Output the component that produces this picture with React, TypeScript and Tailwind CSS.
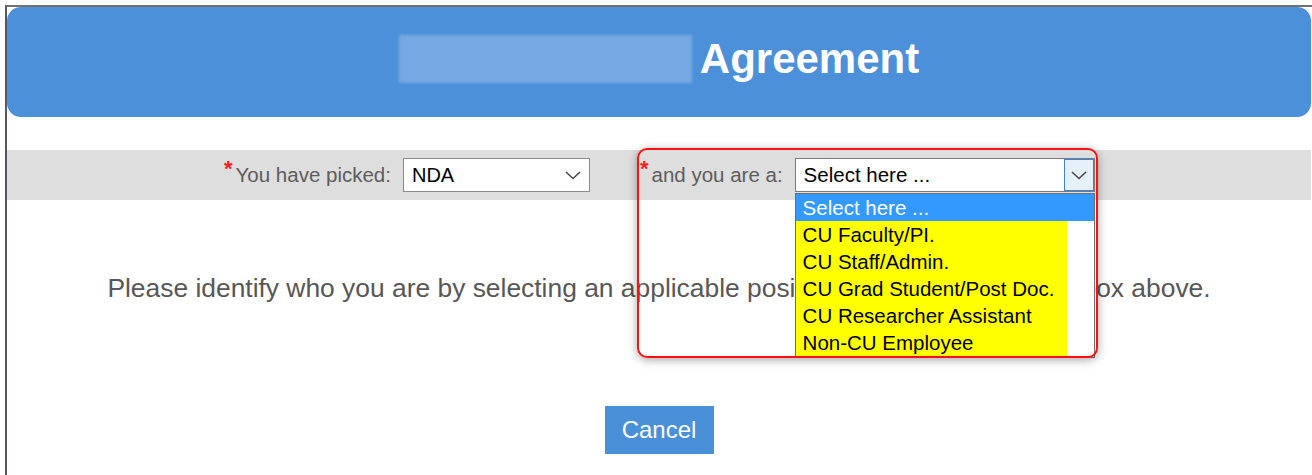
import { useState } from 'react'

const ROLES = [
  'CU Faculty/PI.',
  'CU Staff/Admin.',
  'CU Grad Student/Post Doc.',
  'CU Researcher Assistant',
  'Non-CU Employee',
]

function Chevron({ className }: { className?: string }) {
  return (
    <svg width="16" height="9" viewBox="0 0 16 9" className={className}>
      <path d="M1 1l7 6.5L15 1" fill="none" stroke="#4a4a4a" strokeWidth="1.6" />
    </svg>
  )
}

function Required() {
  return <span className="relative top-[-6px] mr-[3px] text-[22px] font-bold leading-none text-[#f0202a]">*</span>
}

export default function App() {
  const [role] = useState('Select here ...')

  return (
    <div className="h-[475px] w-[1312px] overflow-hidden bg-white pl-[5px] pt-[5px] font-['Liberation_Sans',Arial,sans-serif]">
      <div className="h-full border-l-2 border-t-2 border-l-[#55595e] border-t-[#707070] pr-px">
        {/* Title banner */}
        <div className="flex h-[110px] items-center justify-center gap-[8px] rounded-[14px] bg-[#4b90d9] pb-[6px]">
          <div className="h-[48px] w-[293px] bg-[#76a9e1] blur-[1.5px]" />
          <h1 className="text-[42px] font-bold leading-none text-white">Agreement</h1>
        </div>

        {/* Selection bar */}
        <div className="mt-[33px] flex h-[50px] items-center gap-[50px] bg-[#dedede] pl-[217px]">
          <div className="flex items-center">
            <Required />
            <span className="mr-[12px] text-[20.5px] text-[#5c5c5c]">You have picked:</span>
            <div className="flex h-[34px] w-[187px] items-center justify-between border border-[#8a8a8a] bg-white pl-[8px] pr-[8px]">
              <span className="text-[20px] text-black">NDA</span>
              <Chevron />
            </div>
          </div>

          <div className="relative flex items-center">
            <Required />
            <span className="mr-[12px] text-[20.5px] text-[#5c5c5c]">and you are a:</span>
            <div className="relative flex h-[34px] w-[300px] items-center border border-[#7a7a7a] bg-white pl-[8px]">
              <span className="flex-1 text-[20.5px] text-black">{role}</span>
              <div className="flex h-full w-[30px] items-center justify-center border border-[#3a86d8] bg-[#e5f0fb]">
                <Chevron />
              </div>

              {/* Open option list */}
              <ul className="absolute left-[-1px] top-[34px] z-10 w-[300px] border border-[#6f6f6f] bg-white pb-px text-[20.5px] leading-[27px]">
                <li className="bg-[#3399ff] pl-[7px] text-white">Select here ...</li>
                {ROLES.map((r) => (
                  <li key={r} className="w-[271px] bg-[#ffff00] pl-[7px] text-black">
                    {r}
                  </li>
                ))}
              </ul>
            </div>

            <div className="pointer-events-none absolute left-[-3px] top-[-10px] z-20 h-[210px] w-[461px] rounded-[10px] border-2 border-[#ff1010] shadow-[0_2px_10px_rgba(0,0,0,0.35)]" />
          </div>
        </div>

        <p className="mt-[73px] text-center text-[26.4px] leading-[30px] text-[#575757]">
          Please identify who you are by selecting an applicable position from the drop-down box above.
        </p>

        <div className="mt-[103px] flex justify-center">
          <button className="h-[48px] w-[109px] bg-[#4a90d9] text-[24px] text-white">Cancel</button>
        </div>
      </div>
    </div>
  )
}
